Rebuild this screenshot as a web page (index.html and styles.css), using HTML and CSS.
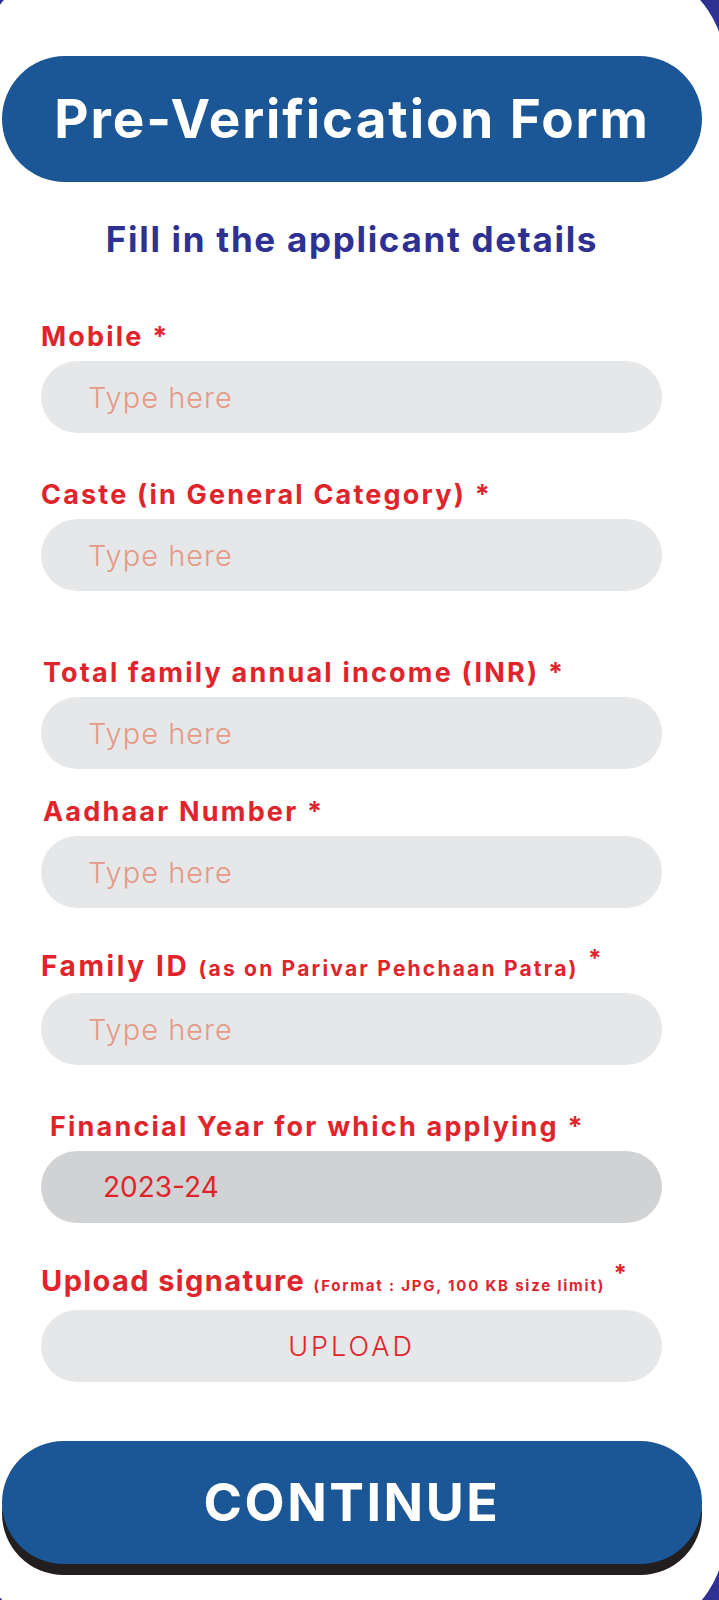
FILE: index.html
```html
<!DOCTYPE html>
<html lang="en">
<head>
<meta charset="utf-8">
<title>Pre-Verification Form</title>
<link rel="stylesheet" href="styles.css">
</head>
<body>
<main class="card">
  <h1 class="title">Pre-Verification Form</h1>
  <p class="subtitle">Fill in the applicant details</p>
  <form class="form">
    <div class="field field--first">
      <label class="label">Mobile <span class="req">*</span></label>
      <div class="input"><span class="placeholder">Type here</span></div>
    </div>
    <div class="field">
      <label class="label">Caste (in General Category) <span class="req">*</span></label>
      <div class="input"><span class="placeholder">Type here</span></div>
    </div>
    <div class="field field--wide">
      <label class="label label--in2">Total family annual income (INR) <span class="req">*</span></label>
      <div class="input"><span class="placeholder">Type here</span></div>
    </div>
    <div class="field field--tight">
      <label class="label label--in2">Aadhaar Number <span class="req">*</span></label>
      <div class="input"><span class="placeholder">Type here</span></div>
    </div>
    <div class="field field--snug">
      <label class="label label--lg">Family ID <span class="note">(as on Parivar Pehchaan Patra)</span> <sup class="sup">*</sup></label>
      <div class="input"><span class="placeholder">Type here</span></div>
    </div>
    <div class="field">
      <label class="label label--in9">Financial Year for which applying <span class="req">*</span></label>
      <div class="input input--filled"><span class="value">2023-24</span></div>
    </div>
    <div class="field field--snug">
      <label class="label label--xl">Upload signature <span class="note note--small">(Format : JPG, 100 KB size limit)</span> <sup class="sup">*</sup></label>
      <div class="input input--upload"><span class="value value--upload">UPLOAD</span></div>
    </div>
  </form>
  <button class="continue" type="button">CONTINUE</button>
</main>
</body>
</html>
```

FILE: styles.css
```css
html, body {
  margin: 0;
  padding: 0;
}

body {
  background: #2e3192;
  width: 719px;
  height: 1600px;
  overflow: hidden;
  font-family: Inter, "Open Sans", "DejaVu Sans", sans-serif;
}

.card {
  background: #ffffff;
  margin: -34px -6px 0 -21px;
  height: 1670px;
  border-radius: 100px;
  padding: 90px 23px 0;
  box-sizing: border-box;
}

.title {
  margin: 0;
  height: 126px;
  border-radius: 63px;
  background: #1b5696;
  color: #ffffff;
  display: flex;
  align-items: center;
  justify-content: center;
  font-size: 53px;
  font-weight: 700;
  letter-spacing: 1.9px;
}

.subtitle {
  margin: 0;
  padding-top: 37px;
  text-align: center;
  color: #2e3192;
  font-size: 35px;
  line-height: 40px;
  font-weight: 700;
  letter-spacing: 1.7px;
}

.form {
  margin: 0 0 0 39px;
  width: 621px;
  display: flex;
  flex-direction: column;
}

.field {
  margin-top: 42px;
}

.field--first {
  margin-top: 58px;
}

.field--wide {
  margin-top: 62px;
}

.field--tight {
  margin-top: 23px;
}

.field--snug {
  margin-top: 38px;
}

.label {
  display: block;
  color: #e1242b;
  font-size: 27px;
  line-height: 40px;
  font-weight: 700;
  letter-spacing: 2.2px;
  margin-bottom: 4px;
  white-space: nowrap;
}

.label--lg {
  font-size: 28px;
  letter-spacing: 2.6px;
}

.label--xl {
  font-size: 29px;
  letter-spacing: 1.4px;
}

.label--in2 {
  padding-left: 2px;
}

.label--in9 {
  padding-left: 9px;
}

.note {
  font-size: 21px;
  letter-spacing: 2.2px;
}

.note--small {
  font-size: 15px;
  letter-spacing: 1.8px;
}

.sup {
  font-size: 24px;
  vertical-align: 9px;
  line-height: 0;
  letter-spacing: 0;
}

.input {
  height: 72px;
  border-radius: 36px;
  background: #e6e7e8;
  display: flex;
  align-items: center;
  padding-left: 47px;
}

.placeholder {
  color: #e39a87;
  font-size: 29px;
  font-weight: 300;
  letter-spacing: 1px;
}

.input--filled {
  background: #d1d2d4;
  padding-left: 62px;
}

.value {
  color: #e1242b;
  font-size: 28px;
  font-weight: 400;
}

.input--upload {
  justify-content: center;
  padding-left: 0;
}

.value--upload {
  font-size: 27px;
  font-weight: 300;
  letter-spacing: 3px;
}

.continue {
  display: flex;
  align-items: center;
  justify-content: center;
  width: 700px;
  height: 123px;
  margin-top: 59px;
  border: 0;
  border-radius: 62px;
  background: #1b5696;
  box-shadow: 0 11px 0 #231f20;
  color: #ffffff;
  font-family: Inter, "Open Sans", sans-serif;
  font-size: 52px;
  font-weight: 700;
  letter-spacing: 2.5px;
  padding: 0;
}
```
